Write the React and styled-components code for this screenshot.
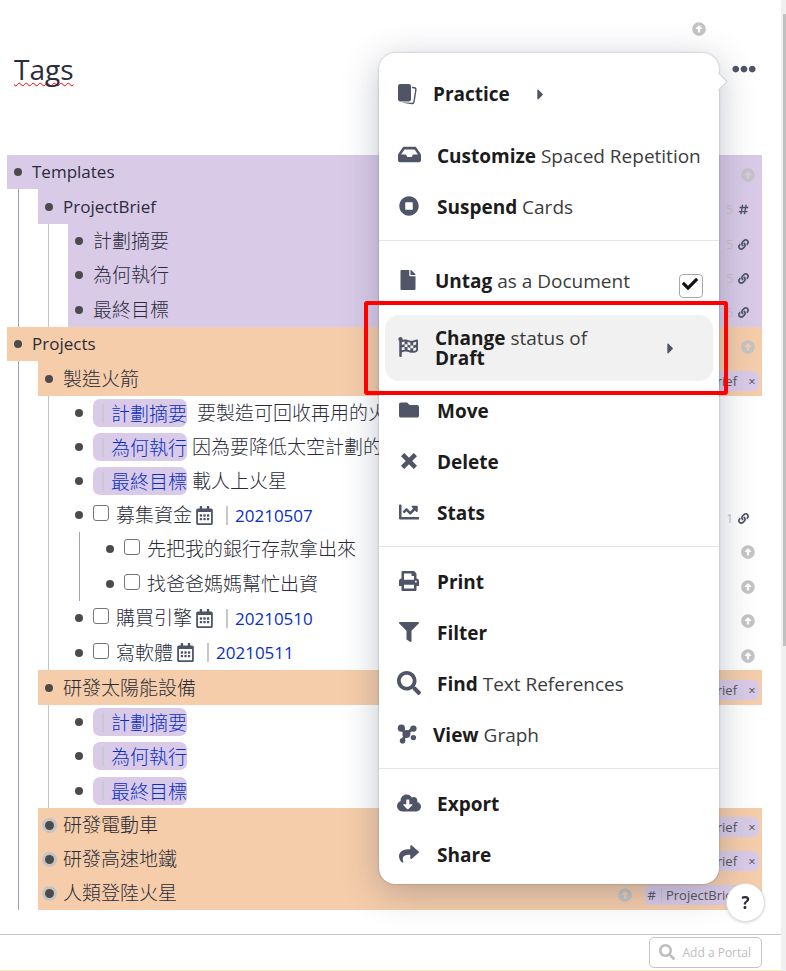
import React from 'react';
import styled, { createGlobalStyle, css } from 'styled-components';
import {
  FaArrowAltCircleUp,
  FaCaretRight,
  FaChartLine,
  FaCheck,
  FaCloudDownloadAlt,
  FaEllipsisH,
  FaFile,
  FaFilter,
  FaFlagCheckered,
  FaFolder,
  FaHashtag,
  FaInbox,
  FaLink,
  FaPrint,
  FaRegCalendarAlt,
  FaSearch,
  FaShare,
  FaStopCircle,
} from 'react-icons/fa';

const colors = {
  ink: '#2a2c38',
  icon: '#4f5567',
  muted: '#c4c4c4',
  link: '#0a2fc4',
  purple: '#d9cbe8',
  orange: '#f5cdaa',
};

const GlobalStyle = createGlobalStyle`
  * {
    box-sizing: border-box;
  }

  body {
    margin: 0;
    background: #fff;
    color: ${colors.ink};
    font-family: 'Open Sans', 'Noto Sans CJK TC', sans-serif;
    font-size: 17px;
    font-weight: 400;
  }

  button, input {
    font: inherit;
    color: inherit;
  }
`;

const Page = styled.div`
  display: flex;
  min-height: 100vh;
`;

const Main = styled.main`
  position: relative;
  flex: 1;
  min-width: 0;
  display: flex;
  flex-direction: column;
`;

const ScrollTrack = styled.div`
  width: 5px;
  padding: 14px 0 0 2px;
  background: #f0f0f0;
`;

const ScrollThumb = styled.div`
  height: 66%;
  background: #c1c1c1;
`;

const IconButton = styled.button`
  display: flex;
  align-items: center;
  padding: 0;
  border: 0;
  background: none;
  color: ${({ $muted }) => ($muted ? colors.muted : colors.icon)};
  font-size: ${({ $size }) => $size || 14}px;
`;

const TopBar = styled.div`
  display: flex;
  justify-content: flex-end;
  padding: 22px 75px 0 0;
`;

const Header = styled.header`
  display: flex;
  justify-content: space-between;
  padding: 10px 25px 0 14px;
`;

const Title = styled.h1`
  margin: 0;
  font-size: 28px;
  font-weight: 400;
  line-height: 46px;
  text-decoration: underline wavy #f00 1px;
  text-decoration-skip-ink: none;
  text-underline-offset: 2px;
`;

const Tree = styled.ul`
  list-style: none;
  margin: 63px 19px 0 7px;
  padding: 0;
`;

const Branch = styled.ul`
  list-style: none;
  margin: 0 0 0 ${({ $depth }) => ($depth === 2 ? 10 : 11)}px;
  padding: 0 0 0 19px;
  border-left: 1px solid ${({ $depth }) => ($depth === 2 ? '#c4c4c4' : '#9ea2b3')};
`;

const Row = styled.div`
  display: flex;
  align-items: center;
  height: ${({ $tall }) => ($tall ? 35 : 34)}px;
  padding-right: 7px;
  background: ${({ $tone }) => colors[$tone] || 'transparent'};
`;

const Bullet = styled.span`
  flex: none;
  display: flex;
  justify-content: center;
  width: 22px;
  margin-right: 3px;

  &::before {
    content: '';
    width: 8px;
    height: 8px;
    border-radius: 50%;
    background: #4b4b4b;
    ${({ $closed }) => $closed && css`
      width: 9px;
      height: 9px;
      box-shadow: 0 0 0 3px #c4c4c4;
    `}
  }
`;

const Content = styled.div`
  flex: 1;
  min-width: 0;
  display: flex;
  align-items: center;
  overflow: hidden;
  white-space: pre;
`;

const Text = styled.span`
  font-size: ${({ $latin }) => ($latin ? 17 : 19)}px;
  font-weight: ${({ $latin }) => ($latin ? 400 : 300)};
  line-height: 28px;
`;

const Slot = styled.a`
  display: flex;
  align-items: center;
  gap: 7px;
  height: 28px;
  padding: 0 0 0 9px;
  border-radius: 7px;
  background: ${colors.purple};
  color: ${colors.link};
  font-size: 19px;
  font-weight: 300;
  text-decoration: none;

  &::before {
    content: '';
    width: 2px;
    height: 19px;
    background: #c8c8cd;
  }
`;

const Check = styled.input`
  appearance: none;
  flex: none;
  width: 16px;
  height: 16px;
  margin: 0 7px 4px 0;
  border: 1px solid #767676;
  border-radius: 3px;
  background: #fff;
`;

const DateLink = styled.a`
  display: flex;
  align-items: center;
  gap: 7px;
  margin-left: 12px;
  color: ${colors.link};
  text-decoration: none;

  &::before {
    content: '';
    width: 2px;
    height: 19px;
    background: #c8c8c8;
  }
`;

const Calendar = styled(FaRegCalendarAlt)`
  flex: none;
  margin-left: 3px;
  color: ${colors.icon};
  font-size: 19px;
`;

const Meta = styled.div`
  display: flex;
  align-items: center;
  gap: 5px;
  padding-top: 6px;
  padding-right: ${({ $edge }) => ($edge ? 0 : 6)}px;
  color: ${colors.icon};
  font-size: 11px;
`;

const Count = styled.span`
  color: ${colors.muted};
  font-size: 12px;
`;

const TagGroup = styled.div`
  display: flex;
  align-items: center;
  gap: 13px;
  margin: 4px -4px 0 0;
`;

const Tag = styled.span`
  display: flex;
  align-items: center;
  height: 20px;
  padding: 0 3px 0 3px;
  border-radius: 6px;
  background: ${colors.purple};
  color: #555;
  font-size: 13px;
`;

const TagMark = styled.span`
  margin-right: 4px;
  padding-right: 5px;
  border-right: 1px solid #c4c4c8;
  line-height: 14px;
`;

const TagClose = styled.button`
  width: 8px;
  margin-left: 11px;
  padding: 0;
  border: 0;
  background: none;
  line-height: 14px;
`;

const Footer = styled.footer`
  display: flex;
  justify-content: flex-end;
  align-items: flex-start;
  height: 37px;
  margin-top: auto;
  padding: 2px 19px 0;
  border-top: 1px solid #c6c6c6;
  border-bottom: 1px solid #f3e6ae;
`;

const PortalButton = styled.button`
  display: flex;
  align-items: center;
  gap: 8px;
  height: 31px;
  padding: 0 10px 0 9px;
  border: 1px solid #c4c4c4;
  border-radius: 5px;
  background: #fff;
  color: #bdbdbd;
  font-size: 12px;

  svg {
    margin-bottom: 2px;
    font-size: 16px;
  }
`;

const HelpButton = styled.button`
  position: fixed;
  right: 21px;
  bottom: 49px;
  width: 39px;
  height: 39px;
  padding: 0;
  border: 1px solid #dedede;
  border-radius: 50%;
  background: #fff;
  box-shadow: 0 1px 3px rgba(0, 0, 0, 0.15);
  font-size: 17px;
  font-weight: 700;
`;

const Menu = styled.div`
  position: absolute;
  top: 53px;
  right: 62px;
  width: 340px;
  padding: 10px 0 3px;
  border-radius: 16px;
  background: #fff;
  box-shadow: 0 0 2px rgba(0, 0, 0, 0.3), 0 8px 36px rgba(45, 55, 85, 0.3);
  font-size: 19px;

  &::before {
    content: '';
    position: absolute;
    top: 22px;
    right: -6px;
    width: 12px;
    height: 12px;
    border: solid #d0d0d0;
    border-width: 1px 1px 0 0;
    background: #fff;
    transform: rotate(45deg);
  }
`;

const itemLayout = css`
  display: flex;
  align-items: center;
  gap: 16px;
  width: 100%;
  height: 51px;
  padding: 0 16px 2px 18px;
  border: 0;
  background: none;
  text-align: left;
  white-space: nowrap;
`;

const Item = styled.button`
  ${itemLayout}
`;

const PracticeItem = styled.button`
  ${itemLayout}
  height: 62px;
  margin-bottom: 6px;
  padding-bottom: 0;
`;

const ToggleItem = styled.label`
  ${itemLayout}
  height: 61px;
`;

const StatusWrap = styled.div`
  display: grid;
  padding: 3px 6px 5px;
`;

const StatusItem = styled.button`
  ${itemLayout}
  position: relative;
  height: 66px;
  padding: 0 34px 0 12px;
  border-radius: 14px;
  background: #f1f1f1;
  line-height: 20px;
`;

const RedFrame = styled.span`
  position: absolute;
  inset: -14px -15px -14px -21px;
  border: 4px solid #f00;
  border-radius: 3px;
  pointer-events: none;
`;

const ItemIcon = styled.span`
  flex: none;
  display: flex;
  justify-content: center;
  width: ${({ $width }) => $width || 24}px;
  margin-bottom: ${({ $level }) => ($level ? 0 : 2)}px;
  color: ${colors.icon};
  font-size: ${({ $size }) => $size || 20}px;
`;

const ItemLabel = styled.span`
  flex: ${({ $grow }) => ($grow ? 1 : 'none')};
  color: #3c3c3c;

  b {
    color: #1c1c1c;
    font-weight: 700;
  }
`;

const Caret = styled(FaCaretRight)`
  margin-left: 6px;
  color: ${colors.icon};
  font-size: 17px;
`;

const Divider = styled.hr`
  height: 1px;
  margin: 7px 0 10px;
  border: 0;
  background: #e4e4e4;
`;

const ToggleBox = styled.span`
  display: grid;
  margin-top: 11px;

  svg {
    grid-area: 1 / 1;
    place-self: center;
    margin: 0 3px 4px 0;
    color: #111;
    font-size: 16px;
    pointer-events: none;
  }
`;

const ToggleInput = styled.input`
  appearance: none;
  grid-area: 1 / 1;
  width: 24px;
  height: 24px;
  margin: 0;
  border: 1px solid #a8a8a8;
  border-radius: 4px;
  background: #fff;
`;

const CardsIcon = () => (
  <svg width="20" height="22" viewBox="0 0 20 22" aria-hidden="true">
    <rect x="6.5" y="4" width="11.5" height="16" rx="2" transform="rotate(9 12 12)" fill="none" stroke="currentColor" strokeWidth="1.4" />
    <rect x="1" y="1" width="14" height="18.5" rx="2.5" fill="#fff" />
    <rect x="1" y="1" width="13" height="17.5" rx="2.2" fill="currentColor" />
  </svg>
);

const CrossIcon = () => (
  <svg width="16" height="16" viewBox="0 0 16 16" aria-hidden="true">
    <path d="M3.2 3.2L12.8 12.8M12.8 3.2L3.2 12.8" fill="none" stroke="currentColor" strokeWidth="4.6" strokeLinecap="square" />
  </svg>
);

const GraphIcon = () => (
  <svg width="20" height="20" viewBox="0 0 20 20" aria-hidden="true">
    <path d="M4.5 4.5L9 10L16 4.5M9 10L5.5 16.5" fill="none" stroke="currentColor" strokeWidth="3" strokeLinecap="round" />
    <g fill="currentColor">
      <circle cx="4.4" cy="4.2" r="3.6" />
      <circle cx="9.4" cy="10" r="4" />
      <circle cx="16.4" cy="4.6" r="3.2" />
      <circle cx="5.6" cy="16.8" r="2.8" />
      <circle cx="16.4" cy="13.6" r="2.7" />
    </g>
  </svg>
);

const UpButton = () => (
  <IconButton $muted aria-label="Move up">
    <FaArrowAltCircleUp />
  </IconButton>
);

const Refs = ({ count, tag }) => (
  <Meta>
    <Count>{count}</Count>
    {tag ? <FaHashtag /> : <FaLink />}
  </Meta>
);

const ProjectTag = () => (
  <TagGroup>
    <UpButton />
    <Tag>
      <TagMark>#</TagMark>
      ProjectBrief
      <TagClose aria-label="Remove tag">×</TagClose>
    </Tag>
  </TagGroup>
);

const metaTypes = {
  up: <Meta $edge><UpButton /></Meta>,
  tag: <ProjectTag />,
};

const outline = [
  {
    text: 'Templates', latin: true, tone: 'purple', meta: 'up',
    children: [
      {
        text: 'ProjectBrief', latin: true, tone: 'purple', refs: 5, hash: true,
        children: [
          { text: '計劃摘要', tone: 'purple', refs: 5 },
          { text: '為何執行', tone: 'purple', refs: 5 },
          { text: '最終目標', tone: 'purple', refs: 5 },
        ],
      },
    ],
  },
  {
    text: 'Projects', latin: true, tone: 'orange', meta: 'up',
    children: [
      {
        text: '製造火箭', tone: 'orange', meta: 'tag',
        children: [
          { slot: '計劃摘要', text: '  要製造可回收再用的火' },
          { slot: '為何執行', text: ' 因為要降低太空計劃的' },
          { slot: '最終目標', text: ' 載人上火星' },
          {
            todo: true, text: '募集資金', date: '20210507', refs: 1,
            children: [
              { todo: true, text: '先把我的銀行存款拿出來', meta: 'up' },
              { todo: true, text: '找爸爸媽媽幫忙出資', meta: 'up' },
            ],
          },
          { todo: true, text: '購買引擎', date: '20210510', meta: 'up' },
          { todo: true, text: '寫軟體', date: '20210511', meta: 'up' },
        ],
      },
      {
        text: '研發太陽能設備', tone: 'orange', meta: 'tag',
        children: [{ slot: '計劃摘要' }, { slot: '為何執行' }, { slot: '最終目標' }],
      },
      { text: '研發電動車', tone: 'orange', meta: 'tag', closed: true },
      { text: '研發高速地鐵', tone: 'orange', meta: 'tag', closed: true },
      { text: '人類登陸火星', tone: 'orange', meta: 'tag', closed: true },
    ],
  },
];

const Node = ({ node, depth, last }) => (
  <li>
    <Row $tone={node.tone} $tall={(depth === 2 && !node.closed) || (depth > 2 && last)}>
      <Bullet $closed={node.closed} />
      <Content>
        {node.todo && <Check type="checkbox" aria-label={node.text} />}
        {node.slot && <Slot href="#">{node.slot}</Slot>}
        {node.text && <Text $latin={node.latin}>{node.text}</Text>}
        {node.date && (
          <>
            <Calendar />
            <DateLink href="#">{node.date}</DateLink>
          </>
        )}
      </Content>
      {node.refs && <Refs count={node.refs} tag={node.hash} />}
      {metaTypes[node.meta]}
    </Row>
    {node.children && (
      <Branch $depth={depth}>
        {node.children.map((child, i) => (
          <Node key={i} node={child} depth={depth + 1} last={i === node.children.length - 1} />
        ))}
      </Branch>
    )}
  </li>
);

const MenuItem = ({ icon, size, width, bold, children }) => (
  <Item>
    <ItemIcon $size={size} $width={width}>{icon}</ItemIcon>
    <ItemLabel><b>{bold}</b>{children}</ItemLabel>
  </Item>
);

const DocumentMenu = () => (
  <Menu>
    <PracticeItem>
      <ItemIcon $width={20} $level><CardsIcon /></ItemIcon>
      <ItemLabel><b>Practice</b></ItemLabel>
      <Caret />
    </PracticeItem>
    <MenuItem icon={<FaInbox />} size={23} bold="Customize"> Spaced Repetition</MenuItem>
    <MenuItem icon={<FaStopCircle />} bold="Suspend"> Cards</MenuItem>
    <Divider />
    <ToggleItem>
      <ItemIcon $width={22}><FaFile /></ItemIcon>
      <ItemLabel $grow><b>Untag</b> as a Document</ItemLabel>
      <ToggleBox>
        <ToggleInput type="checkbox" defaultChecked />
        <FaCheck />
      </ToggleBox>
    </ToggleItem>
    <StatusWrap>
      <StatusItem>
        <ItemIcon $width={22}><FaFlagCheckered /></ItemIcon>
        <ItemLabel $grow><b>Change</b> status of<br /><b>Draft</b></ItemLabel>
        <Caret />
        <RedFrame />
      </StatusItem>
    </StatusWrap>
    <MenuItem icon={<FaFolder />} bold="Move" />
    <MenuItem icon={<CrossIcon />} bold="Delete" />
    <MenuItem icon={<FaChartLine />} bold="Stats" />
    <Divider />
    <MenuItem icon={<FaPrint />} bold="Print" />
    <MenuItem icon={<FaFilter />} bold="Filter" />
    <MenuItem icon={<FaSearch />} size={24} bold="Find"> Text References</MenuItem>
    <MenuItem icon={<GraphIcon />} width={20} bold="View"> Graph</MenuItem>
    <Divider />
    <MenuItem icon={<FaCloudDownloadAlt />} size={24} bold="Export" />
    <MenuItem icon={<FaShare />} bold="Share" />
  </Menu>
);

const App = () => (
  <>
    <GlobalStyle />
    <Page>
      <Main>
        <TopBar>
          <UpButton />
        </TopBar>
        <Header>
          <Title>Tags</Title>
          <IconButton $size={24} aria-label="More options">
            <FaEllipsisH />
          </IconButton>
        </Header>
        <Tree>
          {outline.map((node) => (
            <Node key={node.text} node={node} depth={1} />
          ))}
        </Tree>
        <Footer>
          <PortalButton>
            <FaSearch />
            Add a Portal
          </PortalButton>
        </Footer>
        <DocumentMenu />
      </Main>
      <ScrollTrack>
        <ScrollThumb />
      </ScrollTrack>
    </Page>
    <HelpButton aria-label="Help">?</HelpButton>
  </>
);

export default App;
